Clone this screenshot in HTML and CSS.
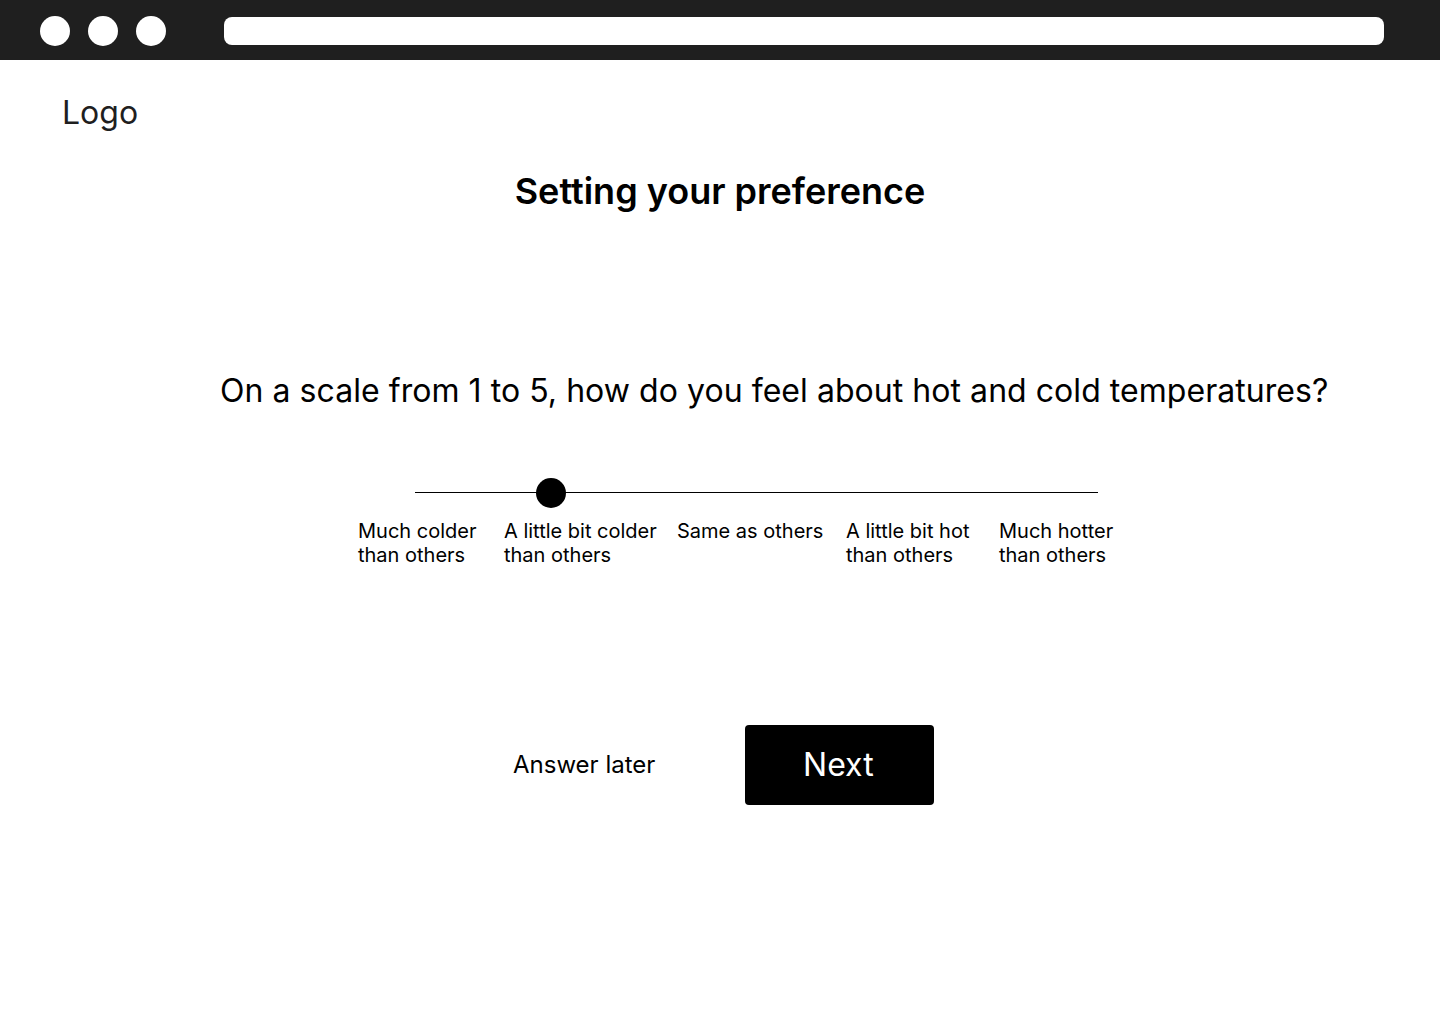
FILE: index.html
```html
<!DOCTYPE html>
<html lang="en">
<head>
<meta charset="utf-8">
<title>Setting your preference</title>
<link rel="stylesheet" href="styles.css">
</head>
<body>
<header class="chrome">
  <div class="dots">
    <span class="dot"></span>
    <span class="dot"></span>
    <span class="dot"></span>
  </div>
  <div class="urlbar"></div>
</header>
<main class="page">
  <div class="logo">Logo</div>
  <h1 class="title">Setting your preference</h1>
  <p class="question">On a scale from 1 to 5, how do you feel about hot and cold temperatures?</p>
  <div class="slider">
    <div class="track"></div>
    <div class="knob"></div>
  </div>
  <div class="labels">
    <span class="label">Much colder<br>than others</span>
    <span class="label">A little bit colder<br>than others</span>
    <span class="label">Same as others</span>
    <span class="label">A little bit hot<br>than others</span>
    <span class="label">Much hotter<br>than others</span>
  </div>
  <div class="actions">
    <span class="later">Answer later</span>
    <button class="next" type="button">Next</button>
  </div>
</main>
</body>
</html>
```
FILE: styles.css
```css
* { box-sizing: border-box; }
html, body { margin: 0; padding: 0; background: #fff; }
body {
  font-family: Inter, "Noto Sans", "Liberation Sans", sans-serif;
  color: #000;
  width: 1440px;
  height: 1024px;
  overflow: hidden;
}
.chrome {
  height: 60px;
  background: #1f1f1f;
  display: flex;
  align-items: flex-start;
  padding: 16px 56px 0 40px;
}
.dots { display: flex; gap: 18px; }
.dot {
  width: 30px;
  height: 30px;
  border-radius: 50%;
  background: #fff;
}
.urlbar {
  margin-left: 58px;
  margin-top: 1px;
  flex: 1;
  height: 28px;
  background: #fff;
  border-radius: 8px;
}
.page { position: relative; }
.logo {
  margin: 33px 0 0 62px;
  font-size: 32px;
  line-height: 40px;
  color: #1f1f1f;
}
.title {
  margin: 36px 0 0;
  text-align: center;
  font-size: 36px;
  line-height: 44px;
  font-weight: 600;
}
.question {
  margin: 158px 0 0 220px;
  font-size: 32px;
  line-height: 40px;
  font-weight: 400;
  letter-spacing: 0.05px;
}
.slider {
  margin: 67px 0 0 415px;
  width: 683px;
  height: 30px;
  position: relative;
}
.track {
  position: absolute;
  left: 0;
  right: 0;
  top: 14px;
  height: 1px;
  background: #000;
}
.knob {
  position: absolute;
  left: 121px;
  top: 0;
  width: 30px;
  height: 30px;
  border-radius: 50%;
  background: #000;
}
.labels {
  margin: 11px 0 0 358px;
  display: grid;
  grid-template-columns: 146px 173px 169px 153px auto;
  font-size: 20px;
  line-height: 24px;
}
.actions {
  margin: 158px 0 0 513px;
  display: flex;
  align-items: center;
  gap: 90px;
}
.later {
  font-size: 24px;
  line-height: 32px;
}
.next {
  width: 189px;
  height: 80px;
  background: #000;
  color: #fff;
  border: none;
  border-radius: 4px;
  font-family: inherit;
  font-size: 32px;
  line-height: 40px;
  padding: 0 3px 0 0;
}
```
